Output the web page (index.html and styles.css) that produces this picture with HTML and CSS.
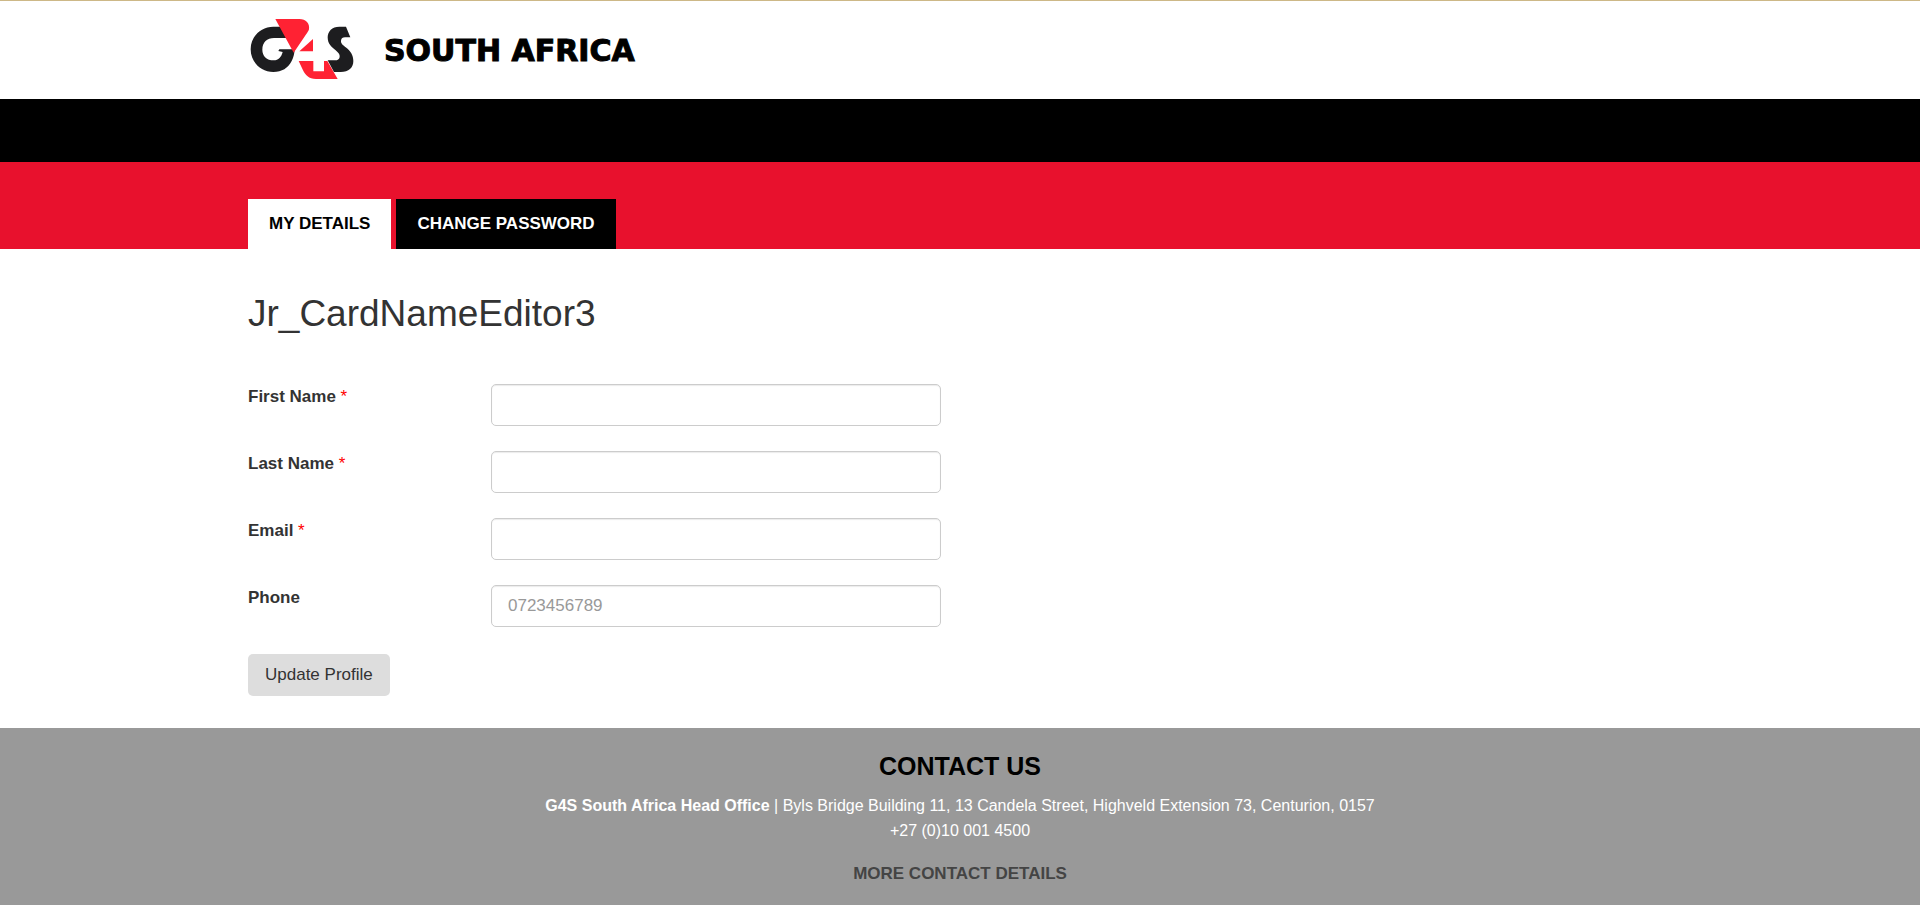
FILE: index.html
```html
<!DOCTYPE html>
<html lang="en">
<head>
<meta charset="utf-8">
<title>My Details - G4S South Africa</title>
<link rel="stylesheet" href="styles.css">
</head>
<body>
<header class="site-header">
  <div class="container brand">
    <svg class="brand-logo" viewBox="54 54 318 186" role="img" aria-label="G4S">
      <path fill="#1d1d1f" d="M154 80H130C92 80 62 110 62 148S92 216 130 216C156 216 174 204 185 183C190 173 193 163 194 148H148L145 153L158 156C154 171 146 181 131 181C110 181 97 168 97 149C97 127 111 114 132 114H170Z"/>
      <path fill="#ff2233" d="M136 57H208C228 57 240 70 237 88C235 94 232 98 229 102L191 158Z"/>
      <path fill="#ff2233" d="M249 117V154H208Z"/>
      <path fill="#ff2233" d="M206 183H250V214H282V183H292L323 237H258C236 237 226 225 219 211Z"/>
      <path fill="#1d1d1f" d="M348 80H328C306 80 293 94 293 112C293 132 305 141 317 151C325 158 330 163 329 171C328 178 323 181 315 181H293L312 216H332C356 216 370 203 370 183C370 166 362 153 349 143C338 134 332 130 333 122C334 115 338 112 345 112H361Z"/>
    </svg>
    <span class="brand-name">SOUTH AFRICA</span>
  </div>
</header>
<div class="menu-bar"></div>
<nav class="tab-bar" aria-label="Profile">
  <div class="container tabs">
    <a class="tab tab-active" href="#details">MY DETAILS</a>
    <a class="tab" href="#password">CHANGE PASSWORD</a>
  </div>
</nav>
<main class="container content" id="details">
  <h1 class="page-title">Jr_CardNameEditor3</h1>
  <form class="profile-form">
    <div class="field">
      <label class="field-label" for="first-name">First Name <span class="required">*</span></label>
      <input class="field-input" id="first-name" type="text">
    </div>
    <div class="field">
      <label class="field-label" for="last-name">Last Name <span class="required">*</span></label>
      <input class="field-input" id="last-name" type="text">
    </div>
    <div class="field">
      <label class="field-label" for="email">Email <span class="required">*</span></label>
      <input class="field-input" id="email" type="email">
    </div>
    <div class="field">
      <label class="field-label" for="phone">Phone</label>
      <input class="field-input" id="phone" type="tel" placeholder="0723456789">
    </div>
    <div class="actions">
      <button class="button" type="button">Update Profile</button>
    </div>
  </form>
</main>
<footer class="site-footer">
  <h2 class="footer-title">CONTACT US</h2>
  <p class="footer-text"><strong>G4S South Africa Head Office</strong> | Byls Bridge Building 11, 13 Candela Street, Highveld Extension 73, Centurion, 0157<br>+27 (0)10 001 4500</p>
  <a class="footer-link" href="#contact">MORE CONTACT DETAILS</a>
</footer>
</body>
</html>
```

FILE: styles.css
```css
* {
  box-sizing: border-box;
}

body {
  margin: 0;
  background: #fff;
  color: #333;
  font-family: "Liberation Sans", Arial, sans-serif;
  font-size: 17px;
  line-height: 25px;
}

.container {
  width: 100%;
  max-width: 1464px;
  margin: 0 auto;
  padding: 0 20px;
}

.site-header {
  border-top: 1px solid #cdb887;
}

.brand {
  display: flex;
  align-items: center;
  gap: 30px;
  padding-top: 17px;
  padding-bottom: 19px;
}

.brand-logo {
  width: 106px;
  height: 62px;
}

.brand-name {
  padding-top: 4px;
  color: #000;
  font-family: "DejaVu Sans", sans-serif;
  font-size: 30px;
  font-weight: bold;
  line-height: 36px;
  -webkit-text-stroke: 1px #000;
}

.menu-bar {
  height: 63px;
  background: #000;
}

.tab-bar {
  padding-top: 37px;
  background: #e8112d;
}

.tabs {
  display: flex;
  gap: 5px;
}

.tab {
  padding: 12px 21px 13px;
  background: #000;
  color: #fff;
  font-weight: bold;
  text-decoration: none;
}

.tab-active {
  background: #fff;
  color: #000;
}

.content {
  padding-top: 43px;
  padding-bottom: 32px;
}

.page-title {
  margin: 0 0 49px;
  font-size: 37px;
  font-weight: normal;
  line-height: 43px;
}

.profile-form {
  display: flex;
  flex-direction: column;
  gap: 25px;
}

.field {
  display: grid;
  grid-template-columns: 243px minmax(0, 450px);
  align-items: start;
}

.field-label {
  font-weight: bold;
}

.required {
  color: #f00;
  font-weight: normal;
}

.field-input {
  width: 100%;
  height: 42px;
  padding: 7px 16px;
  border: 1px solid #ccc;
  border-radius: 5px;
  background: #fff;
  box-shadow: inset 0 1px 1px rgba(0, 0, 0, 0.08);
  color: #555;
  font: inherit;
}

.field-input::placeholder {
  color: #999;
  opacity: 1;
}

.actions {
  padding-top: 2px;
}

.button {
  display: block;
  padding: 8px 17px 9px;
  border: 0;
  border-radius: 5px;
  background: #ddd;
  color: #333;
  font: inherit;
}

.site-footer {
  padding: 24px 20px 19px;
  background: #999;
  color: #fff;
  font-size: 16px;
  text-align: center;
}

.footer-title {
  margin: 0 0 13px;
  color: #000;
  font-size: 25px;
  line-height: 28px;
}

.footer-text {
  margin: 0 0 18px;
}

.footer-link {
  display: inline-block;
  color: #444;
  font-size: 17px;
  font-weight: bold;
  text-decoration: none;
}
```
